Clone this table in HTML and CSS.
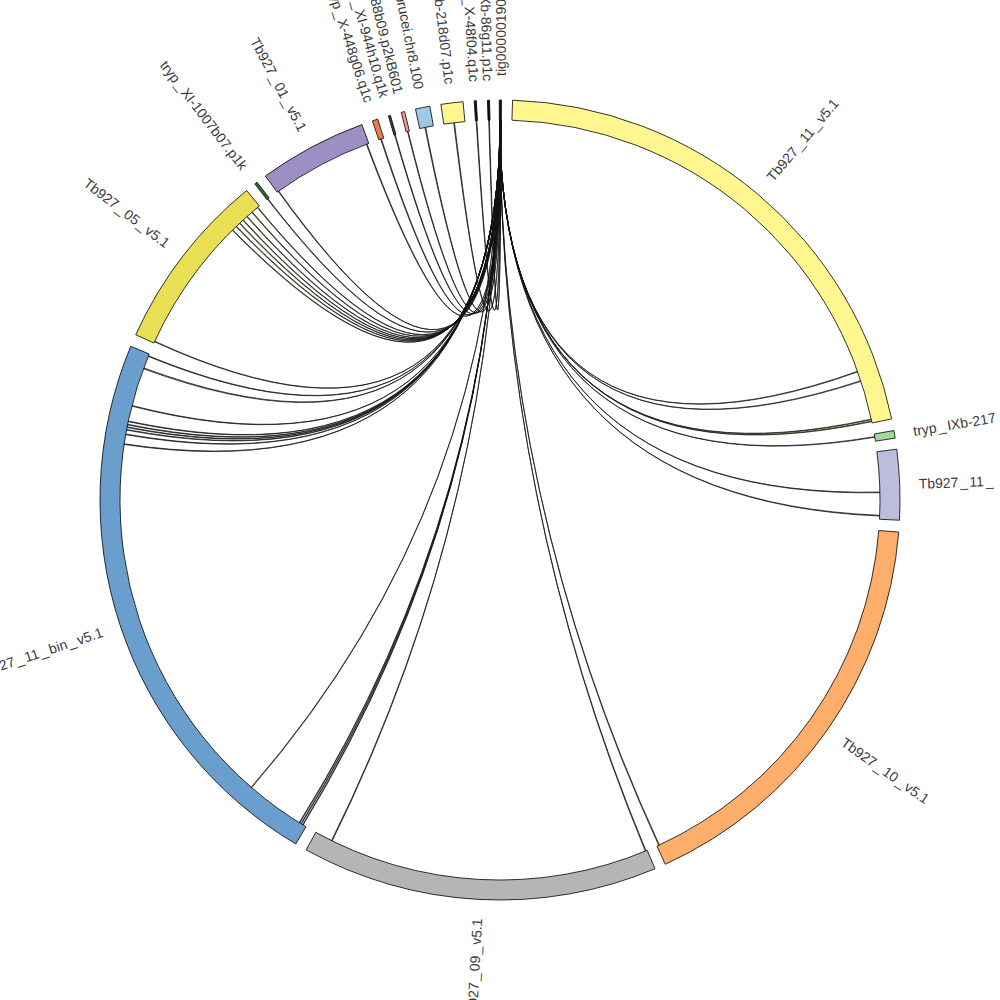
FILE: index.html
```html
<!DOCTYPE html>
<html lang="en">
<head>
<meta charset="utf-8">
<title>Chord diagram</title>
<link rel="stylesheet" href="styles.css">
</head>
<body>
<svg class="chart" width="1000" height="1000" viewBox="0 0 1000 1000" xmlns="http://www.w3.org/2000/svg">
  <g id="chords" class="chords"></g>
  <g id="arcs" class="arcs"></g>
  <g class="labels">
    <text class="label" transform="rotate(-49.95 500 500)" x="919" y="500" dy="0.35em">Tb927_11_v5.1</text>
    <text class="label" transform="rotate(-9.45 500 500)" x="919" y="500" dy="0.35em">tryp_IXb-217</text>
    <text class="label" transform="rotate(-2.2 500 500)" x="919" y="500" dy="0.35em">Tb927_11_</text>
    <text class="label" transform="rotate(35.1 500 500)" x="919" y="500" dy="0.35em">Tb927_10_v5.1</text>
    <text class="label" transform="rotate(-89.9 500 500)" x="924" y="500" dy="0.35em">tig00000190</text>
    <text class="label end" transform="rotate(273.1 500 500)" x="81" y="500" dy="0.35em">Tb927_09_v5.1</text>
    <text class="label end" transform="rotate(341.65 500 500)" x="81" y="500" dy="0.35em">Tb927_11_bin_v5.1</text>
    <text class="label end" transform="rotate(37.55 500 500)" x="81" y="500" dy="0.35em">Tb927_05_v5.1</text>
    <text class="label end" transform="rotate(52.4 500 500)" x="81" y="500" dy="0.35em">tryp_XI-1007b07.p1k</text>
    <text class="label end" transform="rotate(61.95 500 500)" x="81" y="500" dy="0.35em">Tb927_01_v5.1</text>
    <text class="label end" transform="rotate(71.8 500 500)" x="81" y="500" dy="0.35em">tryp_X-448g06.q1c</text>
    <text class="label end" transform="rotate(74 500 500)" x="81" y="500" dy="0.35em">tryp_XI-944h10.q1k</text>
    <text class="label end" transform="rotate(76 500 500)" x="81" y="500" dy="0.35em">tryp_X-88b09.p2kB601</text>
    <text class="label end" transform="rotate(78.85 500 500)" x="81" y="500" dy="0.35em">T.brucei.chr8.100</text>
    <text class="label end" transform="rotate(83.1 500 500)" x="81" y="500" dy="0.35em">tryp_Xb-218d07.p1c</text>
    <text class="label end" transform="rotate(86.45 500 500)" x="81" y="500" dy="0.35em">tryp_X-48f04.q1c</text>
    <text class="label end" transform="rotate(88.35 500 500)" x="81" y="500" dy="0.35em">tryp_Xb-86g11.p1c</text>
  </g>
</svg>
<script src="script.js"></script>
</body>
</html>
```

FILE: styles.css
```css
html, body {
  margin: 0;
  padding: 0;
  background: #ffffff;
}

body {
  width: 1000px;
  height: 1000px;
  overflow: hidden;
}

.chart {
  display: block;
  width: 1000px;
  height: 1000px;
  overflow: hidden;
}

.seg {
  stroke: #000000;
  stroke-width: 0.8;
}

.chord {
  stroke: #111111;
  stroke-width: 0.7;
  fill-opacity: 0.9;
}

.label {
  font-family: "Liberation Sans", Arial, sans-serif;
  font-size: 14px;
  fill: #3a3a3a;
}

.label.end {
  text-anchor: end;
}
```

FILE: script.js
```js
(function () {
  var NS = "http://www.w3.org/2000/svg";
  var cx = 500, cy = 500, ri = 380, ro = 400;

  function pt(r, a) {
    var t = a * Math.PI / 180;
    return (cx + r * Math.sin(t)).toFixed(2) + " " + (cy - r * Math.cos(t)).toFixed(2);
  }

  var segs = [
    [1.8, 78.3, "#fff68f"],
    [80.0, 81.1, "#a1d99b"],
    [82.7, 92.9, "#bcbddc"],
    [94.6, 155.6, "#fdae6b"],
    [157.2, 209.0, "#b5b5b5"],
    [210.7, 292.6, "#6a9ecd"],
    [294.4, 320.7, "#e8df55"],
    [322.2, 322.6, "#2d6a3e"],
    [324.1, 339.8, "#9d8ec3"],
    [341.4, 342.2, "#e5804f"],
    [343.8, 344.1, "#34493a"],
    [345.7, 346.2, "#f59a8a"],
    [347.8, 349.9, "#9ecae1"],
    [351.5, 354.7, "#fff68f"],
    [356.3, 356.6, "#111111"],
    [358.2, 358.5, "#111111"],
    [-0.1, 0.2, "#111111"]
  ];

  var arcs = document.getElementById("arcs");
  segs.forEach(function (s) {
    var d = "M" + pt(ro, s[0]) +
      " A" + ro + " " + ro + " 0 0 1 " + pt(ro, s[1]) +
      " L" + pt(ri, s[1]) +
      " A" + ri + " " + ri + " 0 0 0 " + pt(ri, s[0]) + " Z";
    var p = document.createElementNS(NS, "path");
    p.setAttribute("d", d);
    p.setAttribute("class", "seg");
    p.setAttribute("fill", s[2]);
    arcs.appendChild(p);
  });

  var Y = "#c9b84a", G = "#5f8f58", L = "#6e6f90", O = "#b06a2e", GR = "#555555",
      B = "#3f5f80", Y5 = "#8a8330", P = "#5c4f80";
  var chords = [
    [70.2, 0.1, Y], [71.7, 0.1, Y], [77.7, 0.1, Y], [78.0, 0.1, Y],
    [80.4, 0.1, G], [88.8, 0.1, L], [92.3, 0.12, L],
    [155.2, 0.12, O], [157.4, 0.12, GR], [206.2, 0.12, GR],
    [211.2, 0.1, B], [211.5, 0.1, B], [211.8, 0.1, B], [220.8, 0.1, "#a6a03c"],
    [278.4, 0.1, B], [279.9, 0.1, B], [280.6, 0.1, B], [281.0, 0.1, B],
    [281.4, 0.1, B], [281.9, 0.1, B], [284.3, 0.1, B], [290.2, 0.15, "#7d93a8"], [292.2, 0.1, B],
    [294.6, 0.1, Y5], [315.2, 0.1, Y5], [316.0, 0.1, Y5], [316.7, 0.1, Y5],
    [317.4, 0.1, Y5], [318.2, 0.1, Y5], [319.2, 0.1, Y5], [320.3, 0.1, Y5],
    [322.3, 0.1, "#2d6a3e"], [324.3, 0.1, P], [339.4, 0.12, "#7a5a40"],
    [341.7, 0.12, "#a0502a"], [343.9, 0.1, "#34493a"], [345.9, 0.1, "#a05040"],
    [348.6, 0.12, "#40607a"], [353.0, 0.12, "#556070"], [356.4, 0.1, "#4a2a1a"], [358.3, 0.1, "#4a2a1a"]
  ];

  var g = document.getElementById("chords");
  chords.forEach(function (c, i) {
    var a0 = c[0], a1 = c[0] + c[1];
    var b0 = -0.08 + i * 0.006, b1 = b0 + 0.003;
    var d = "M" + pt(ri, a0) +
      " A" + ri + " " + ri + " 0 0 1 " + pt(ri, a1) +
      " Q" + cx + " " + cy + " " + pt(ri, b0) +
      " A" + ri + " " + ri + " 0 0 1 " + pt(ri, b1) +
      " Q" + cx + " " + cy + " " + pt(ri, a0) + " Z";
    var p = document.createElementNS(NS, "path");
    p.setAttribute("d", d);
    p.setAttribute("class", "chord");
    p.setAttribute("fill", c[2]);
    g.appendChild(p);
  });

  // widen the spacing around underscores, as in the rendered labels
  var labels = document.querySelectorAll(".label");
  Array.prototype.forEach.call(labels, function (t) {
    var parts = t.textContent.split("_");
    if (parts.length < 2) return;
    while (t.firstChild) t.removeChild(t.firstChild);
    parts.forEach(function (part, k) {
      if (k > 0) {
        var u = document.createElementNS(NS, "tspan");
        u.setAttribute("dx", "1.6");
        u.textContent = "_";
        t.appendChild(u);
      }
      if (part.length) {
        var s = document.createElementNS(NS, "tspan");
        if (k > 0) s.setAttribute("dx", "1.6");
        s.textContent = part;
        t.appendChild(s);
      }
    });
  });
})();
```
